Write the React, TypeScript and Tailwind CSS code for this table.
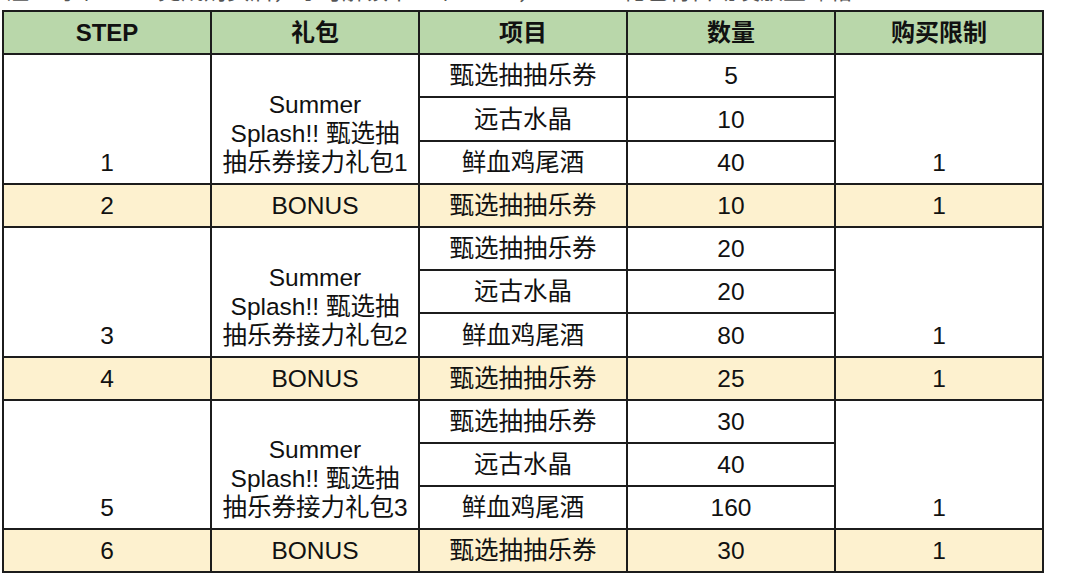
import React from "react";

const font = {
  fontFamily: '"Liberation Sans", Arial, "Noto Sans CJK SC", sans-serif',
};

function C({ children, span, yellow }: { children?: React.ReactNode; span?: 3; yellow?: boolean }) {
  return (
    <div
      className={`flex items-end justify-center text-center pb-[6px] leading-[29px] text-[24.5px] text-[#111] ${
        span === 3 ? "row-span-3" : ""
      } ${yellow ? "bg-[#fdf1cf]" : "bg-white"}`}
    >
      <div>{children}</div>
    </div>
  );
}

function H({ children }: { children: React.ReactNode }) {
  return (
    <div className="flex items-center justify-center bg-[#b9d7aa] text-[24px] font-bold text-[#111] leading-[29px]">
      {children}
    </div>
  );
}

function Gift({ n }: { n: number }) {
  return (
    <div className="leading-[29px]">
      <div>Summer</div>
      <div>Splash!! 甄选抽</div>
      <div>抽乐券接力礼包{n}</div>
    </div>
  );
}

const steps = [
  { step: 1, gift: 1, q: [5, 10, 40], bonusStep: 2, bonus: 10 },
  { step: 3, gift: 2, q: [20, 20, 80], bonusStep: 4, bonus: 25 },
  { step: 5, gift: 3, q: [30, 40, 160], bonusStep: 6, bonus: 30 },
];

export default function App() {
  return (
    <div className="w-[1068px] h-[578px] bg-white overflow-hidden relative" style={font}>
      <div className="h-[10px] overflow-hidden pl-[6px]">
        <div className="-mt-[23px] text-[23px] leading-[29px] text-[#555] whitespace-nowrap">
          注：每个STEP完成购买后，才可解锁下一个STEP，BONUS礼包将自动发放至邮箱
        </div>
      </div>
      <div className="ml-[2px] w-[1042px] grid grid-cols-[repeat(5,206px)] grid-rows-[repeat(13,41.2px)] gap-[2px] p-[2px] bg-[#1c1c1c]">
        <H>STEP</H>
        <H>礼包</H>
        <H>项目</H>
        <H>数量</H>
        <H>购买限制</H>
        {steps.map((s) => (
          <React.Fragment key={s.step}>
            <C span={3}>{s.step}</C>
            <C span={3}>
              <Gift n={s.gift} />
            </C>
            <C>甄选抽抽乐券</C>
            <C>{s.q[0]}</C>
            <C span={3}>1</C>
            <C>远古水晶</C>
            <C>{s.q[1]}</C>
            <C>鲜血鸡尾酒</C>
            <C>{s.q[2]}</C>
            <C yellow>{s.bonusStep}</C>
            <C yellow>BONUS</C>
            <C yellow>甄选抽抽乐券</C>
            <C yellow>{s.bonus}</C>
            <C yellow>1</C>
          </React.Fragment>
        ))}
      </div>
    </div>
  );
}
